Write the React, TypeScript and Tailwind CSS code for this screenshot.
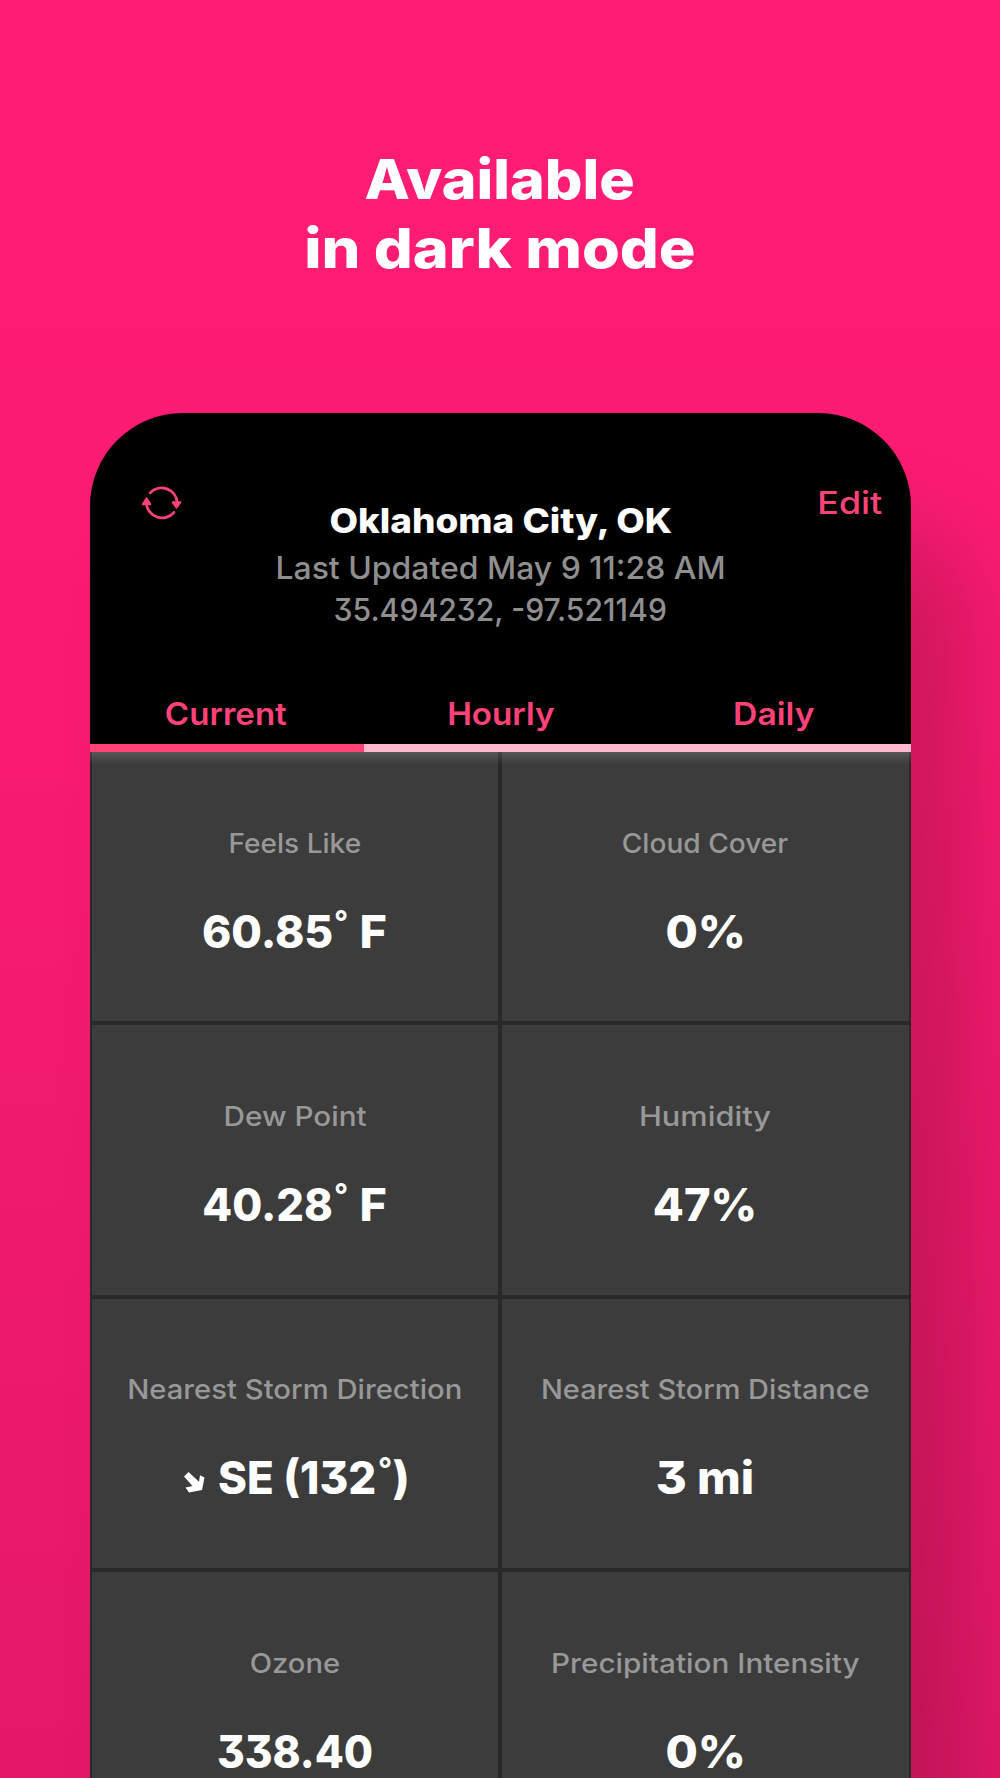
import type { ReactNode } from "react";

function Fixed({ className, children }: { className: string; children: ReactNode }) {
  return <span className={`flex shrink-0 justify-center ${className}`}>{children}</span>;
}

function Degree() {
  return (
    <Fixed className="w-[11px]">
      <span className="-translate-x-px -translate-y-[9px] text-[31px] font-bold">°</span>
    </Fixed>
  );
}

function Fahrenheit({ value, fit }: { value: string; fit: string }) {
  return (
    <>
      <Fixed className="mr-[5px] ml-px w-[127px]">
        <span className={fit}>{value}</span>
      </Fixed>
      <Degree />
      <Fixed className="ml-[14px] w-[25px]">
        <span className="-translate-x-px translate-y-px scale-x-[1.04]">F</span>
      </Fixed>
    </>
  );
}

function SouthEastArrow() {
  return (
    <svg width="21" height="21" viewBox="0 0 21 21" className="mt-[23.5px] mr-[14px] ml-px shrink-0" fill="white">
      <path d="M4.5 0L15 9.8L16 3.3L20.5 5.5L18 18L5 20.5L1.5 15.5L8.5 14L0 4.5Z" />
    </svg>
  );
}

function Cell({ label, fit, children }: { label: string; fit: string; children: ReactNode }) {
  return (
    <div className="flex flex-col items-center bg-[#3c3c3c] pt-[73px]">
      <div className={`text-[27px] leading-9 font-medium whitespace-nowrap text-[#989898] ${fit}`}>{label}</div>
      <div className="mt-10 flex h-[60px] justify-center text-[45px] leading-[60px] font-extrabold whitespace-pre text-white">
        {children}
      </div>
    </div>
  );
}

function RefreshIcon() {
  return (
    <svg width="42" height="42" viewBox="0 0 42 42" fill="none">
      <path
        d="M9.2 10.8A15.7 15.7 0 0 1 36.2 20.5M33 30.4A15.7 15.7 0 0 1 5.4 21"
        stroke="#ff4378"
        strokeWidth="2.7"
        strokeLinecap="round"
      />
      <path
        d="M31.6 20.2H39.4L35.5 25.6ZM1.8 22.2H9.4L5.6 16.2Z"
        fill="#ff4378"
        stroke="#ff4378"
        strokeWidth="2"
        strokeLinejoin="round"
      />
    </svg>
  );
}

export default function App() {
  return (
    <div className="flex h-[1778px] w-[1000px] flex-col overflow-hidden bg-linear-to-b from-[#ff1c74] from-10% via-[#f91b70] via-40% to-[#e51868] pt-[145px] font-['Inter',sans-serif] [font-feature-settings:'cv09']">
      <h1 className="flex flex-col items-center text-[55px] leading-[69px] font-extrabold whitespace-nowrap text-white">
        <span className="scale-x-[1.075]">Available</span>
        <span className="scale-x-[1.113]">in dark mode</span>
      </h1>

      <main className="mt-[130px] ml-[90px] h-[1365px] w-[821px] shrink-0 rounded-t-[93px] bg-black shadow-[60px_110px_90px_rgba(0,0,0,0.17)]">
        <header className="flex h-[279px] whitespace-nowrap">
          <div className="w-[180px] pt-[68.5px] pl-[51px]">
            <RefreshIcon />
          </div>
          <div className="flex flex-1 flex-col items-center pt-[84px] text-[31px] leading-[42px] font-medium text-[#8f8f8f]">
            <h2 className="mb-0.5 scale-x-[1.086] text-[34px] leading-[48px] font-extrabold text-white">
              Oklahoma City, OK
            </h2>
            <p className="scale-x-[1.03]">Last Updated May 9 11:28 AM</p>
            <p className="scale-x-[0.973]">35.494232, -97.521149</p>
          </div>
          <div className="flex w-[180px] justify-end pt-[69px] pr-7 text-[31px] leading-[42px] font-medium text-[#ff4378]">
            <span className="origin-right -translate-x-px scale-x-[1.155]">Edit</span>
          </div>
        </header>

        <nav className="grid h-[52px] grid-cols-3 pt-px text-center text-[31px] leading-[42px] font-semibold text-[#ff4378]">
          <span className="-translate-x-px scale-x-[1.067]">Current</span>
          <span className="scale-x-[1.07]">Hourly</span>
          <span className="scale-x-[1.087]">Daily</span>
        </nav>
        <div className="grid h-2 grid-cols-3 bg-[#ffb9ce]">
          <div className="bg-[#ff4278]" />
        </div>

        <section className="relative grid h-[1026px] grid-cols-[406px_407px] grid-rows-[269px_270px_269px_206px] gap-1 overflow-hidden bg-[#292929] px-0.5">
          <Cell label="Feels Like" fit="translate-y-px scale-x-[1.04]">
            <Fahrenheit value="60.85" fit="translate-y-px scale-x-[0.985]" />
          </Cell>
          <Cell label="Cloud Cover" fit="-translate-x-px translate-y-px scale-x-[1.041]">
            <span className="translate-y-px scale-x-[1.04]">0%</span>
          </Cell>
          <Cell label="Dew Point" fit="translate-y-px scale-x-[1.1]">
            <Fahrenheit value="40.28" fit="translate-y-px scale-x-[0.965]" />
          </Cell>
          <Cell label="Humidity" fit="-translate-x-px translate-y-px scale-x-[1.14]">
            <span className="-translate-x-px translate-y-px scale-x-[1.005]">47%</span>
          </Cell>
          <Cell label="Nearest Storm Direction" fit="scale-x-[1.083]">
            <SouthEastArrow />
            <Fixed className="mr-[5px] w-[157px]">
              <span className="scale-x-[0.975]">SE (132</span>
            </Fixed>
            <Degree />
            <Fixed className="ml-[3px] w-[13px]">)</Fixed>
          </Cell>
          <Cell label="Nearest Storm Distance" fit="scale-x-[1.072]">
            <span className="-translate-x-px scale-x-[1.05]">3 mi</span>
          </Cell>
          <Cell label="Ozone" fit="translate-y-px scale-x-[1.08]">
            <span className="translate-y-px scale-x-[0.94]">338.40</span>
          </Cell>
          <Cell label="Precipitation Intensity" fit="translate-y-px scale-x-[1.1]">
            <span className="translate-y-px scale-x-[1.04]">0%</span>
          </Cell>
          <div className="absolute inset-x-0 top-0 h-3 bg-linear-to-b from-white/14 to-transparent" />
        </section>
      </main>
    </div>
  );
}
